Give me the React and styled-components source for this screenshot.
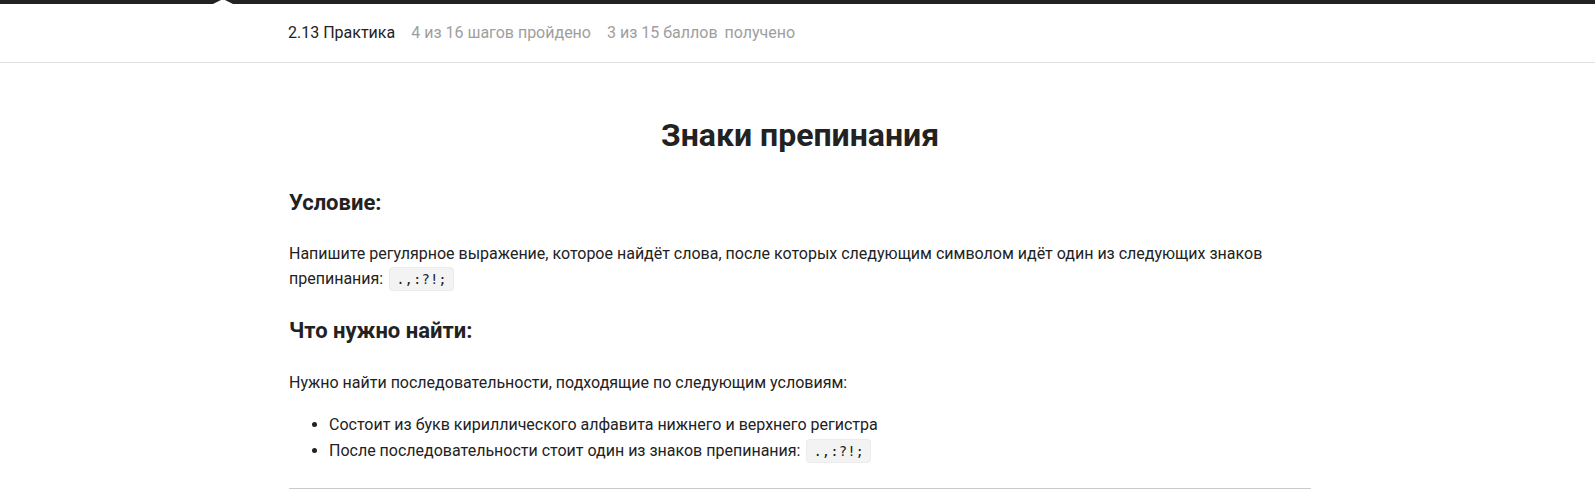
import React from 'react'
import styled, { createGlobalStyle } from 'styled-components'

const GlobalStyle = createGlobalStyle`
  body {
    margin: 0;
    background: #fff;
    color: #222;
    font-family: Roboto, 'Liberation Sans', sans-serif;
  }
`

const TopBar = styled.div`
  position: relative;
  height: 4px;
  background: #222;

  &::after {
    content: '';
    position: absolute;
    left: 213px;
    bottom: 0;
    border-left: 10px solid transparent;
    border-right: 10px solid transparent;
    border-bottom: 5px solid #fff;
  }
`

const Header = styled.div`
  height: 58px;
  border-bottom: 1px solid #e0e0e0;
  padding-left: 5px;
`

const Column = styled.div`
  max-width: 1022px;
  margin: 0 auto;
`

const HeaderRow = styled(Column)`
  display: flex;
  align-items: center;
  height: 100%;
  padding-bottom: 2px;
  box-sizing: border-box;
  gap: 16px;
  font-size: 16px;
`

const Lesson = styled.span`
  color: #222;
  margin-left: -1px;
`

const Stat = styled.span`
  color: #9e9e9e;

  span {
    margin-left: 7px;
  }
`

const Main = styled.main`
  padding-left: 5px;
`

const Article = styled(Column)`
  padding-top: 53px;
`

const Title = styled.h1`
  margin: 0 0 36px;
  font-size: 32px;
  font-weight: 700;
  line-height: 1.2;
  text-align: center;
`

const SubTitle = styled.h2`
  margin: 0 0 ${p => p.$gap ?? 26}px;
  font-size: 22px;
  font-weight: 700;
  line-height: 1.2;
`

const Text = styled.p`
  margin: 0 0 ${p => p.$gap ?? 26}px;
  font-size: 16px;
  line-height: 1.6;
`

const List = styled.ul`
  margin: 0 0 25px;
  padding-left: 40px;
  font-size: 16px;
  line-height: 1.6;
`

const Code = styled.code`
  font-family: 'DejaVu Sans Mono', 'Liberation Mono', monospace;
  font-size: 14px;
  padding: 3px 6px;
  margin-left: 2px;
  background: #f3f3f3;
  border: 1px solid #ececec;
  border-radius: 4px;
`

const Rule = styled.hr`
  margin: 0;
  border: 0;
  border-top: 1px solid #cacaca;
`

export default function App() {
  return (
    <>
      <GlobalStyle />
      <TopBar />
      <Header>
        <HeaderRow>
          <Lesson>2.13 Практика</Lesson>
          <Stat>4 из 16 шагов пройдено</Stat>
          <Stat>
            3 из 15 баллов<span>получено</span>
          </Stat>
        </HeaderRow>
      </Header>
      <Main>
        <Article>
          <Title>Знаки препинания</Title>
          <SubTitle $gap={24}>Условие:</SubTitle>
          <Text>
            Напишите регулярное выражение, которое найдёт слова, после которых следующим символом
            идёт один из следующих знаков препинания: <Code>.,:?!;</Code>
          </Text>
          <SubTitle>Что нужно найти:</SubTitle>
          <Text $gap={16}>Нужно найти последовательности, подходящие по следующим условиям:</Text>
          <List>
            <li>Состоит из букв кириллического алфавита нижнего и верхнего регистра</li>
            <li>
              После последовательности стоит один из знаков препинания: <Code>.,:?!;</Code>
            </li>
          </List>
          <Rule />
        </Article>
      </Main>
    </>
  )
}
